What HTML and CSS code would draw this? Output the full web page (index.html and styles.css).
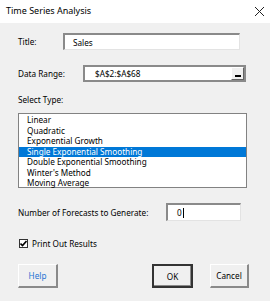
FILE: index.html
```html
<!DOCTYPE html>
<html lang="en">
<head>
    <meta charset="UTF-8">
    <title>Time Series Analysis</title>
    <link rel="stylesheet" href="styles.css">
</head>
<body>
    <div class="dialog">
        <div class="titlebar">
            <span class="caption">Time Series Analysis</span>
            <svg class="close" width="11" height="11" viewBox="0 0 11 11">
                <path d="M1 1 L10 10 M10 1 L1 10" stroke="#222" stroke-width="1" fill="none"/>
            </svg>
        </div>
        <div class="content">
            <div class="row row-title">
                <label class="label label-title">Title:</label>
                <div class="field field-title">Sales</div>
            </div>
            <div class="row row-range">
                <label class="label label-range">Data Range:</label>
                <div class="field field-range">
                    <span>$A$2:$A$68</span>
                    <span class="ref-button"><span class="dash"></span></span>
                </div>
            </div>
            <div class="section-label">Select Type:</div>
            <ul class="listbox">
                <li>Linear</li>
                <li>Quadratic</li>
                <li>Exponential Growth</li>
                <li class="selected">Single Exponential Smoothing</li>
                <li>Double Exponential Smoothing</li>
                <li>Winter's Method</li>
                <li>Moving Average</li>
            </ul>
            <div class="row row-forecast">
                <label class="label label-forecast">Number of Forecasts to Generate:</label>
                <div class="field field-forecast">0<span class="caret"></span></div>
            </div>
            <div class="row row-check">
                <span class="checkbox">
                    <svg width="7" height="7" viewBox="0 0 7 7">
                        <path d="M0.5 3.5 L2.5 5.5 L6.5 1" stroke="#000" stroke-width="1.6" fill="none"/>
                    </svg>
                </span>
                <span class="check-label">Print Out Results</span>
            </div>
            <div class="buttons">
                <button class="btn btn-help">Help</button>
                <button class="btn btn-ok">OK</button>
                <button class="btn btn-cancel">Cancel</button>
            </div>
        </div>
    </div>
</body>
</html>
```

FILE: styles.css
```css
body {
    margin: 0;
    padding: 0;
    font-family: "Noto Sans", "Open Sans", sans-serif;
    font-size: 8.2px;
    color: #000;
    background-color: #f0f0f0;
}
.dialog {
    width: 270px;
    height: 301px;
    overflow: hidden;
}
.titlebar {
    height: 23px;
    background-color: #fff;
    display: flex;
    align-items: center;
    justify-content: space-between;
    padding: 0 5px 0 6px;
    box-sizing: border-box;
}
.caption {
    font-size: 9px;
    margin-top: -2px;
}
.close {
    margin-top: -1px;
}
.content {
    padding: 0 0 0 18px;
}
.row {
    display: flex;
    align-items: center;
}
.label {
    display: inline-block;
}
.field {
    box-sizing: border-box;
    background-color: #fff;
    border-top: 2px solid #8a8a8a;
    border-left: 2px solid #8a8a8a;
    border-right: 1px solid #e3e3e3;
    border-bottom: 1px solid #e3e3e3;
    display: flex;
    align-items: center;
}
.row-title {
    margin-top: 10px;
    height: 17px;
}
.label-title {
    width: 45px;
}
.field-title {
    width: 177px;
    height: 17px;
    padding-left: 8px;
}
.row-range {
    margin-top: 15px;
    height: 17px;
}
.label-range {
    width: 65px;
}
.field-range {
    width: 163px;
    height: 17px;
    padding-left: 10px;
    justify-content: space-between;
    border-right: 2px solid #8a8a8a;
    border-bottom: 2px solid #8a8a8a;
}
.ref-button {
    width: 13px;
    height: 13px;
    box-sizing: border-box;
    background-color: #f0f0f0;
    border-top: 1px solid #fff;
    border-left: 1px solid #fff;
    border-right: 1px solid #646464;
    border-bottom: 1px solid #646464;
    display: flex;
    align-items: flex-end;
    justify-content: center;
}
.dash {
    width: 6px;
    height: 2px;
    background-color: #000;
    margin-bottom: 2px;
}
.section-label {
    margin-top: 12px;
    height: 12px;
    line-height: 12px;
}
.listbox {
    list-style: none;
    margin: 7px 0 0 0;
    padding: 1px 0 0 0;
    width: 229px;
    height: 75px;
    box-sizing: border-box;
    background-color: #fff;
    border: 1px solid #828282;
}
.listbox li {
    height: 10.5px;
    line-height: 10.5px;
    padding-left: 8px;
    white-space: nowrap;
}
.listbox li.selected {
    background-color: #0078d7;
    color: #fff;
}
.row-forecast {
    margin-top: 15px;
    height: 18px;
}
.label-forecast {
    width: 148px;
}
.field-forecast {
    width: 75px;
    height: 18px;
    padding-left: 9px;
}
.caret {
    display: inline-block;
    width: 1px;
    height: 10px;
    background-color: #000;
    margin-left: 1px;
}
.row-check {
    margin-top: 16px;
    height: 12px;
    margin-left: 1px;
}
.checkbox {
    width: 9px;
    height: 9px;
    box-sizing: border-box;
    background-color: #fff;
    border: 1px solid #333;
    display: flex;
    align-items: center;
    justify-content: center;
}
.check-label {
    margin-left: 4px;
}
.buttons {
    display: flex;
    margin-top: 15px;
    height: 24px;
}
.btn {
    font-family: inherit;
    font-size: 8.2px;
    width: 40px;
    height: 24px;
    padding: 0;
    box-sizing: border-box;
    background-color: #f0f0f0;
    color: #000;
    border-top: 1px solid #fff;
    border-left: 1px solid #fff;
    border-right: 2px solid #8a8a8a;
    border-bottom: 2px solid #8a8a8a;
    border-radius: 0;
}
.btn-help {
    color: #1e73d2;
}
.btn-ok {
    margin-left: 94px;
    width: 41px;
    border: 2px solid #333;
    box-shadow: inset -1px -1px 0 #8a8a8a;
}
.btn-cancel {
    margin-left: 17px;
    width: 39px;
}
```
